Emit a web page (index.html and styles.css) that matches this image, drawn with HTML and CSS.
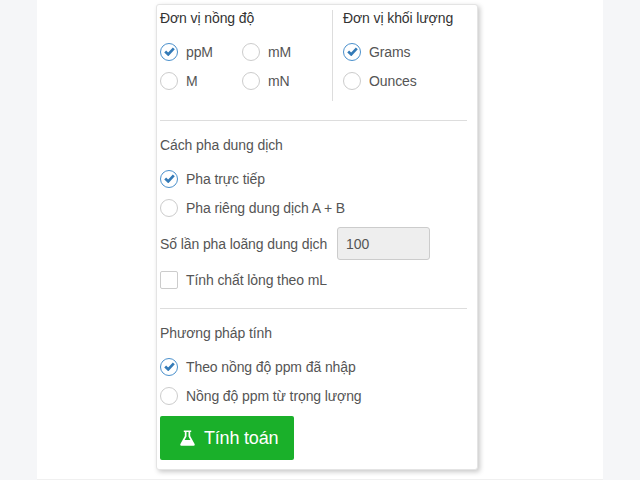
FILE: index.html
```html
<!DOCTYPE html>
<html lang="en">
<head>
    <meta charset="UTF-8">
    <meta name="viewport" content="width=device-width, initial-scale=1.0">
    <title>Tính toán</title>
    <link rel="stylesheet" href="styles.css">
</head>
<body>
    <div class="page">
        <form class="card">
            <div class="units">
                <div class="unit-col unit-conc">
                    <div class="unit-title">Đơn vị nồng độ</div>
                    <div class="unit-grid">
                        <label class="option"><span class="radio checked"><svg viewBox="0 0 12 10"><path d="M1.2 5 L4.6 8.2 L10.8 1.6"/></svg></span>ppM</label>
                        <label class="option"><span class="radio"></span>mM</label>
                        <label class="option"><span class="radio"></span>M</label>
                        <label class="option"><span class="radio"></span>mN</label>
                    </div>
                </div>
                <div class="unit-col unit-mass">
                    <div class="unit-title">Đơn vị khối lượng</div>
                    <div class="unit-list">
                        <label class="option"><span class="radio checked"><svg viewBox="0 0 12 10"><path d="M1.2 5 L4.6 8.2 L10.8 1.6"/></svg></span>Grams</label>
                        <label class="option"><span class="radio"></span>Ounces</label>
                    </div>
                </div>
            </div>
            <hr class="rule rule-first">
            <div class="section-title">Cách pha dung dịch</div>
            <label class="option"><span class="radio checked"><svg viewBox="0 0 12 10"><path d="M1.2 5 L4.6 8.2 L10.8 1.6"/></svg></span>Pha trực tiếp</label>
            <label class="option"><span class="radio"></span>Pha riêng dung dịch A + B</label>
            <div class="dilution">
                <span>Số lần pha loãng dung dịch</span>
                <input class="dilution-input" type="text" value="100" disabled>
            </div>
            <label class="option option-check"><span class="checkbox"></span>Tính chất lỏng theo mL</label>
            <hr class="rule rule-second">
            <div class="section-title">Phương pháp tính</div>
            <label class="option"><span class="radio checked"><svg viewBox="0 0 12 10"><path d="M1.2 5 L4.6 8.2 L10.8 1.6"/></svg></span>Theo nồng độ ppm đã nhập</label>
            <label class="option"><span class="radio"></span>Nồng độ ppm từ trọng lượng</label>
            <button class="calc-button" type="button">
                <svg class="flask" viewBox="0 0 15 16"><path d="M3.8 0.4 H11.2 V2 H10.2 V6 L14.6 14 Q15.2 15.8 13.6 15.8 H1.4 Q-0.2 15.8 0.4 14 L4.8 6 V2 H3.8 Z M6.5 2 V6.5 L4.6 10 H10.4 L8.5 6.5 V2 Z" fill-rule="evenodd"/></svg>
                Tính toán
            </button>
        </form>
    </div>
</body>
</html>
```

FILE: styles.css
```css
html, body {
    margin: 0;
    height: 100%;
}
body {
    background-color: #f5f6f8;
    font-family: "Liberation Sans", Arial, sans-serif;
    font-size: 14px;
    letter-spacing: -0.1px;
    color: #555;
    overflow: hidden;
}
.page {
    width: 566px;
    height: 480px;
    margin-left: 37px;
    padding: 4px 0 0 119px;
    box-sizing: border-box;
    background-color: #fff;
    border-bottom: 1px solid #f0f0f0;
}
.card {
    width: 322px;
    height: 466px;
    box-sizing: border-box;
    padding: 5px 10px 0 3px;
    background-color: #fff;
    border: 1px solid #e4e4e4;
    border-radius: 3px;
    box-shadow: 2px 2px 5px rgba(0, 0, 0, 0.22);
}
.units {
    display: flex;
    height: 91px;
}
.unit-col {
    height: 91px;
}
.unit-conc {
    width: 172px;
}
.unit-mass {
    flex: 1;
    padding-left: 10px;
    border-left: 1px solid #ddd;
}
.unit-title {
    height: 18px;
    line-height: 16px;
    color: #333;
    margin-bottom: 9px;
}
.unit-grid {
    display: grid;
    grid-template-columns: 82px 82px;
}
.option {
    display: flex;
    align-items: center;
    height: 29px;
}
.radio {
    width: 16px;
    height: 16px;
    flex: none;
    margin-right: 8px;
    border: 1px solid #ccc;
    border-radius: 50%;
    display: flex;
    align-items: center;
    justify-content: center;
}
.radio.checked {
    border-color: #4a90cc;
}
.radio svg {
    width: 11px;
    height: 9px;
    fill: none;
    stroke: #337ab7;
    stroke-width: 3;
}
.checkbox {
    width: 16px;
    height: 16px;
    flex: none;
    margin-right: 8px;
    border: 1px solid #ccc;
    border-radius: 2px;
}
.rule {
    margin: 0;
    border: 0;
    border-top: 1px solid #ddd;
}
.rule-first {
    margin-top: 19px;
}
.rule-second {
    margin-top: 14px;
}
.section-title {
    height: 24px;
    line-height: 24px;
    margin-top: 12px;
    margin-bottom: 7px;
}
.dilution {
    display: flex;
    align-items: center;
    justify-content: space-between;
    width: 270px;
    height: 33px;
    margin-top: 5px;
}
.dilution-input {
    width: 93px;
    height: 33px;
    box-sizing: border-box;
    padding: 0 8px;
    background-color: #eee;
    border: 1px solid #ccc;
    border-radius: 3px;
    font: inherit;
    color: #555;
    opacity: 1;
}
.option-check {
    margin-top: 5px;
}
.calc-button {
    display: flex;
    align-items: center;
    gap: 9px;
    width: 134px;
    height: 44px;
    margin-top: 6px;
    padding: 0 0 0 20px;
    background-color: #1ab02a;
    border: 0;
    border-radius: 2px;
    color: #fff;
    font-family: inherit;
    font-size: 18px;
    letter-spacing: -0.2px;
}
.flask {
    width: 15px;
    height: 16px;
    fill: #fff;
}
```
